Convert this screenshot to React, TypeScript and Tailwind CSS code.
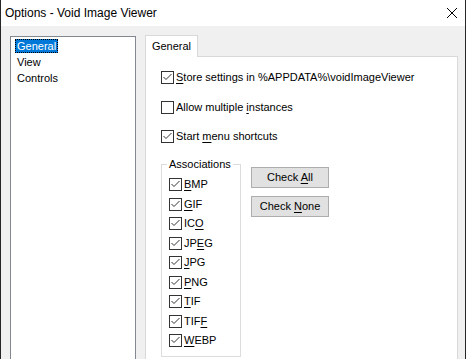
import React from "react";

const Box = ({ checked }: { checked: boolean }) => (
  <span className="w-[13px] h-[13px] shrink-0 border border-[#333333] bg-white flex items-center justify-center">
    {checked && (
      <svg width="11" height="11" viewBox="0 0 11 11">
        <path d="M1.5 5 L4 7.5 L9.5 2" fill="none" stroke="#333333" strokeWidth="1" />
      </svg>
    )}
  </span>
);

// label text with one underlined access key
const Key = ({ pre, k, post }: { pre?: string; k: string; post?: string }) => (
  <span className="ml-[2px] whitespace-pre leading-[13px]">
    {pre}
    <u className="underline-offset-[2px]">{k}</u>
    {post}
  </span>
);

const formats: [string, string, string][] = [
  ["", "B", "MP"],
  ["", "G", "IF"],
  ["IC", "O", ""],
  ["JP", "E", "G"],
  ["", "J", "PG"],
  ["", "P", "NG"],
  ["", "T", "IF"],
  ["TIF", "F", ""],
  ["", "W", "EBP"],
];

export default function App() {
  return (
    <div className="w-[467px] h-[359px] bg-white overflow-hidden text-black font-['Liberation_Sans',Arial,sans-serif]">
      <div className="w-[466px] h-full flex flex-col border-x border-[#262626]">
        {/* Title bar */}
        <div className="h-[26px] shrink-0 bg-white flex items-center justify-between pl-[4px] pr-[8px]">
          <span className="text-[12px]">Options - Void Image Viewer</span>
          <svg width="10" height="10" viewBox="0 0 10 10">
            <path d="M0 0 L10 10 M10 0 L0 10" stroke="#000" strokeWidth="1" />
          </svg>
        </div>

        {/* Body */}
        <div className="flex-1 bg-[#f0f0f0] flex pt-[9px] pl-[9px] gap-[9px] overflow-hidden text-[11px]">
          {/* Page list */}
          <div className="w-[126px] h-[340px] shrink-0 mt-[1px] bg-white border border-[#828790] pt-[1px] pl-[4px]">
            <div className="h-[16px] flex items-center">
              <span className="h-[14px] leading-[14px] px-[2px] bg-[#0078d7] text-white [outline:1px_dotted_#000] [outline-offset:-1px]">
                General
              </span>
            </div>
            <div className="h-[16px] flex items-center pl-[2px]">View</div>
            <div className="h-[16px] flex items-center pl-[2px]">Controls</div>
          </div>

          {/* Tab control */}
          <div className="w-[313px] h-[360px] shrink-0 flex flex-col">
            <div className="flex h-[22px] shrink-0">
              <div className="w-[53px] h-[22px] bg-white border border-b-0 border-[#d9d9d9] flex items-center justify-center">
                General
              </div>
              <div className="flex-1 border-b border-[#d9d9d9]" />
            </div>
            <div className="flex-1 bg-white border-x border-[#d9d9d9] pl-[15px] pt-[14px]">
              <div className="flex flex-col gap-[16.5px]">
                <div className="h-[13px] flex items-center">
                  <Box checked />
                  <Key k="S" post="tore settings in %APPDATA%\voidImageViewer" />
                </div>
                <div className="h-[13px] flex items-center">
                  <Box checked={false} />
                  <Key pre="Allow multiple " k="i" post="nstances" />
                </div>
                <div className="h-[13px] flex items-center">
                  <Box checked />
                  <Key pre="Start " k="m" post="enu shortcuts" />
                </div>
              </div>

              <div className="flex items-start mt-[13px]">
                <fieldset className="w-[80px] border border-[#dcdcdc] pl-[7px] pt-[6px] pb-[9px]">
                  <legend className="ml-[-2px] px-[2px] leading-[16px]">Associations</legend>
                  <div className="flex flex-col gap-[6.5px]">
                    {formats.map(([pre, k, post]) => (
                      <div key={pre + k + post} className="h-[13px] flex items-center">
                        <Box checked />
                        <Key pre={pre} k={k} post={post} />
                      </div>
                    ))}
                  </div>
                </fieldset>

                <div className="ml-[10px] mt-[11px] flex flex-col gap-[8px]">
                  <button className="w-[78px] h-[21px] bg-[#e1e1e1] border border-[#adadad] flex items-center justify-center">
                    <span className="whitespace-pre">
                      Check <u className="underline-offset-[2px]">A</u>ll
                    </span>
                  </button>
                  <button className="w-[78px] h-[21px] bg-[#e1e1e1] border border-[#adadad] flex items-center justify-center">
                    <span className="whitespace-pre">
                      Check <u className="underline-offset-[2px]">N</u>one
                    </span>
                  </button>
                </div>
              </div>
            </div>
          </div>
        </div>
      </div>
    </div>
  );
}
